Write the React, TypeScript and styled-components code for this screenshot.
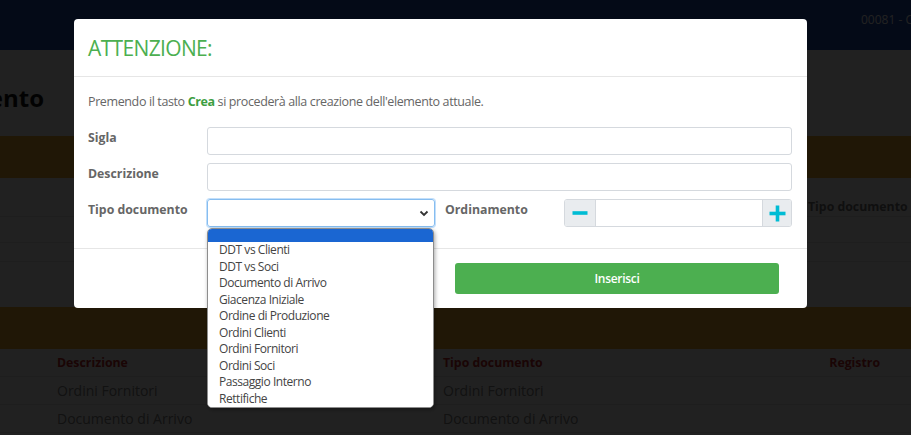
import React from "react";
import styled, { createGlobalStyle } from "styled-components";

const GlobalStyle = createGlobalStyle`
  html, body {
    margin: 0;
    padding: 0;
  }
  body {
    font-family: "Open Sans", "Liberation Sans", sans-serif;
    background: #fff;
    overflow: hidden;
  }
  * {
    box-sizing: border-box;
  }
`;

const Page = styled.div`
  position: relative;
  width: 911px;
  height: 435px;
  overflow: hidden;
  background: #fff;
`;

const NavBar = styled.div`
  height: 50px;
  background: #1f4db1;
  padding: 11px 0 0 861px;
  white-space: nowrap;
  color: #fff;
  font-size: 12px;
`;

const TitleWrap = styled.div`
  width: 44px;
  display: flex;
  justify-content: flex-end;
  white-space: nowrap;
  margin-top: 33px;
`;

const Title = styled.h1`
  margin: 0;
  font-size: 24px;
  line-height: 30px;
  font-weight: 700;
  color: #111;
`;

const Band = styled.div<{ $mt: number }>`
  height: 42px;
  margin-top: ${(p) => p.$mt}px;
  background: #f6b12e;
`;

const Grid = styled.div<{ $h: number }>`
  display: grid;
  grid-template-columns: 386px 365px 1fr;
  padding-left: 57px;
  height: ${(p) => p.$h}px;
  align-items: center;
  border-bottom: 1px solid #e2e2e2;
  font-size: 12.3px;
  white-space: nowrap;
`;

const FilterLabel = styled.div`
  font-weight: 700;
  color: #777;
  padding-top: 19px;
`;

const HeadCell = styled.div<{ $right?: boolean }>`
  font-weight: 700;
  color: #c62828;
  text-align: ${(p) => (p.$right ? "right" : "left")};
  padding-right: ${(p) => (p.$right ? "31px" : "0")};
`;

const Cell = styled.div`
  color: #888;
  font-size: 14px;
`;

const Backdrop = styled.div`
  position: fixed;
  inset: 0;
  background: rgba(0, 0, 0, 0.87);
  display: flex;
  align-items: flex-start;
  padding: 19px 0 0 74px;
`;

const Modal = styled.div`
  width: 733px;
  background: #fff;
  border-radius: 4px;
`;

const ModalHeader = styled.div`
  height: 58px;
  padding: 0 14px;
  display: flex;
  align-items: center;
  border-bottom: 1px solid #e6e6e6;
`;

const ModalTitle = styled.h4`
  margin: 0;
  font-size: 21px;
  font-weight: 400;
  letter-spacing: -0.65px;
  color: #4caf50;
`;

const ModalBody = styled.div`
  padding: 16px 15px 21px 14px;
  display: flex;
  flex-direction: column;
  gap: 8px;
`;

const Intro = styled.p`
  margin: 0 0 8px;
  font-size: 12.5px;
  line-height: 18px;
  letter-spacing: -0.38px;
  color: #666;

  b {
    color: #3d9e41;
    font-weight: 700;
  }
`;

const Row = styled.div`
  display: flex;
  gap: 10px;
`;

const Field = styled.div`
  display: flex;
  flex: 1;
`;

const Label = styled.label`
  width: 119px;
  flex-shrink: 0;
  padding-top: 1px;
  font-size: 12.3px;
  line-height: 20px;
  font-weight: 700;
  color: #666;
`;

const TextInput = styled.div`
  flex: 1;
  height: 28px;
  border: 1px solid #d5d9de;
  border-radius: 3px;
`;

const SelectWrap = styled.div`
  position: relative;
  flex: 1;
`;

const SelectBox = styled.div`
  height: 28px;
  border: 1px solid #86bdf0;
  border-radius: 3px;
  box-shadow: 0 0 0 1px #c3dffa;
  display: flex;
  align-items: center;
  justify-content: flex-end;
  padding-right: 5px;
`;

const Dropdown = styled.ul`
  position: absolute;
  top: calc(100% + 1px);
  left: 0;
  width: 227px;
  margin: 0;
  padding: 0;
  list-style: none;
  background: #fff;
  border: 1px solid #8d8d8d;
  border-radius: 5px;
  box-shadow: 1px 2px 4px rgba(0, 0, 0, 0.35);
  overflow: hidden;
  z-index: 2;
`;

const Option = styled.li<{ $active?: boolean }>`
  height: ${(p) => (p.$active ? "13px" : "16.5px")};
  padding-left: 11px;
  background: ${(p) => (p.$active ? "#1a66d2" : "#fff")};
  font-size: 12px;
  line-height: 16.5px;
  letter-spacing: -0.45px;
  color: #444;
  white-space: nowrap;
`;

const Spinner = styled.div`
  flex: 1;
  height: 28px;
  display: flex;
  border: 1px solid #d5d9de;
  border-radius: 3px;
  overflow: hidden;
`;

const SpinBtn = styled.div<{ $side: "left" | "right" }>`
  width: ${(p) => (p.$side === "left" ? "31px" : "29px")};
  background: #e9ecef;
  display: flex;
  align-items: center;
  justify-content: center;
  border-${(p) => (p.$side === "left" ? "right" : "left")}: 1px solid #d5d9de;
`;

const SpinInput = styled.div`
  flex: 1;
`;

const ModalFooter = styled.div`
  border-top: 1px solid #e6e6e6;
  padding: 14px 28px 14px 15px;
  display: flex;
  justify-content: flex-end;
`;

const SubmitButton = styled.button`
  width: 324px;
  height: 31px;
  border: none;
  border-radius: 3px;
  background: #4caf50;
  color: #fff;
  font-family: "Open Sans", sans-serif;
  font-size: 12px;
  font-weight: 600;
  letter-spacing: -0.3px;
`;

const options = [
  "DDT vs Clienti",
  "DDT vs Soci",
  "Documento di Arrivo",
  "Giacenza Iniziale",
  "Ordine di Produzione",
  "Ordini Clienti",
  "Ordini Fornitori",
  "Ordini Soci",
  "Passaggio Interno",
  "Rettifiche",
];

const Chevron = () => (
  <svg width="10" height="7" viewBox="0 0 10 7">
    <path d="M1.5 1.5 L5 5 L8.5 1.5" fill="none" stroke="#333" strokeWidth="1.8" />
  </svg>
);

const Minus = () => (
  <svg width="16" height="16" viewBox="0 0 16 16">
    <rect x="0.5" y="6.2" width="15" height="3.6" fill="#00bcd4" />
  </svg>
);

const Plus = () => (
  <svg width="17" height="17" viewBox="0 0 17 17">
    <rect x="0.5" y="6.7" width="16" height="3.6" fill="#00bcd4" />
    <rect x="6.7" y="0.5" width="3.6" height="16" fill="#00bcd4" />
  </svg>
);

export default function App() {
  return (
    <>
      <GlobalStyle />
      <Page>
        <NavBar>00081 - Cantina Sociale</NavBar>
        <TitleWrap>
          <Title>Tipo documento</Title>
        </TitleWrap>
        <Band $mt={23} />
        <Grid $h={39}>
          <div />
          <div />
          <FilterLabel>Tipo documento</FilterLabel>
        </Grid>
        <Grid $h={26} />
        <Grid $h={19} />
        <Band $mt={45} />
        <Grid $h={28}>
          <HeadCell>Descrizione</HeadCell>
          <HeadCell>Tipo documento</HeadCell>
          <HeadCell $right>Registro</HeadCell>
        </Grid>
        <Grid $h={28}>
          <Cell>Ordini Fornitori</Cell>
          <Cell>Ordini Fornitori</Cell>
          <Cell />
        </Grid>
        <Grid $h={28}>
          <Cell>Documento di Arrivo</Cell>
          <Cell>Documento di Arrivo</Cell>
          <Cell />
        </Grid>

        <Backdrop>
          <Modal>
            <ModalHeader>
              <ModalTitle>ATTENZIONE:</ModalTitle>
            </ModalHeader>
            <ModalBody>
              <Intro>
                Premendo il tasto <b>Crea</b> si procederà alla creazione dell'elemento attuale.
              </Intro>
              <Row>
                <Field>
                  <Label>Sigla</Label>
                  <TextInput />
                </Field>
              </Row>
              <Row>
                <Field>
                  <Label>Descrizione</Label>
                  <TextInput />
                </Field>
              </Row>
              <Row>
                <Field>
                  <Label>Tipo documento</Label>
                  <SelectWrap>
                    <SelectBox>
                      <Chevron />
                    </SelectBox>
                    <Dropdown>
                      <Option $active />
                      {options.map((o) => (
                        <Option key={o}>{o}</Option>
                      ))}
                    </Dropdown>
                  </SelectWrap>
                </Field>
                <Field>
                  <Label>Ordinamento</Label>
                  <Spinner>
                    <SpinBtn $side="left">
                      <Minus />
                    </SpinBtn>
                    <SpinInput />
                    <SpinBtn $side="right">
                      <Plus />
                    </SpinBtn>
                  </Spinner>
                </Field>
              </Row>
            </ModalBody>
            <ModalFooter>
              <SubmitButton>Inserisci</SubmitButton>
            </ModalFooter>
          </Modal>
        </Backdrop>
      </Page>
    </>
  );
}
